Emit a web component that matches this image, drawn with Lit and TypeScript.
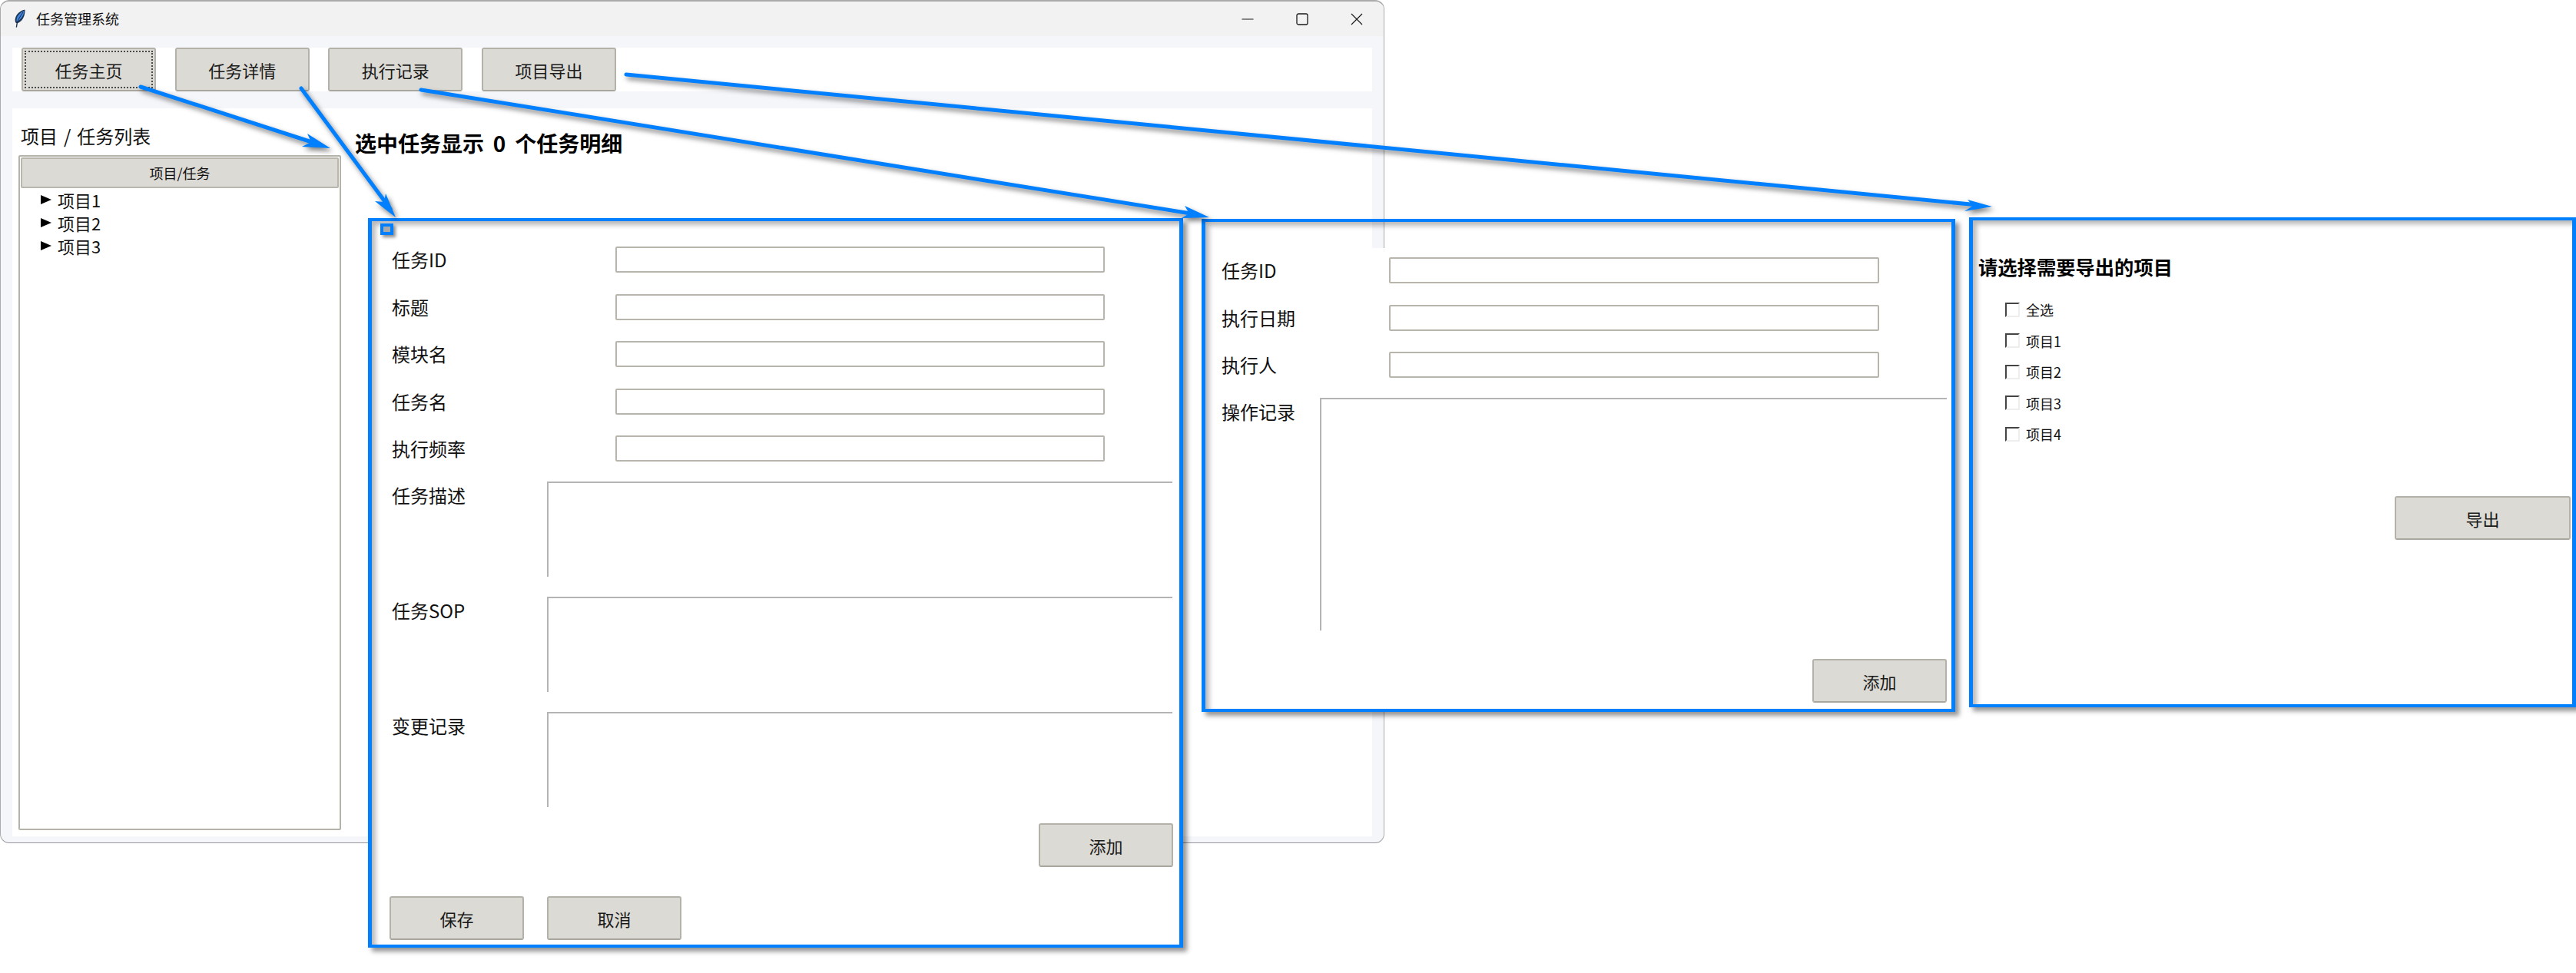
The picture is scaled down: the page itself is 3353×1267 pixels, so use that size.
import { LitElement, html, css, svg } from "lit";
import { customElement } from "lit/decorators.js";

const BLUE = "#0080ff";

const arrows = [
  { line: [183, 113, 412, 187], head: "430,193 400,174 405,185 393,191" },
  { line: [392, 115, 508, 272], head: "515,283 502,252 500,263 488,262" },
  { line: [548, 117, 1556, 279], head: "1574,283 1542,268 1548,278 1538,284" },
  { line: [815, 97, 2575, 267], head: "2593,269 2561,260 2568,268 2557,275" },
];

@customElement("app-root")
export class AppRoot extends LitElement {
  static styles = css`
    :host {
      display: block;
      position: relative;
      width: 3353px;
      height: 1267px;
      background: #fff;
      overflow: hidden;
      font-family: "Noto Sans CJK SC", "Noto Sans", sans-serif;
      color: #111;
    }
    * { box-sizing: border-box; }

    /* application window */
    .window {
      position: absolute;
      left: 0;
      top: 0;
      width: 1802px;
      height: 1098px;
      display: flex;
      flex-direction: column;
      background: #f5f6fa;
      border: 1px solid #ababab;
      border-top-width: 2px;
      border-bottom-color: #96969c;
      border-radius: 12px;
      overflow: hidden;
    }
    .sliver {
      position: absolute;
      left: -1px;
      top: 63px;
      width: 1px;
      height: 600px;
      background: #2f4059;
    }
    .titlebar {
      flex: none;
      height: 45px;
      background: #f2f2f2;
      display: flex;
      align-items: center;
      padding-left: 17px;
      font-size: 18px;
    }
    .titlebar .feather { margin-bottom: 2px; }
    .titlebar .name { margin-left: 14px; line-height: 45px; }
    .controls { margin-left: auto; display: flex; align-items: center; padding-right: 27px; gap: 55px; }
    .controls svg { display: block; width: 16px; height: 16px; }
    .client {
      flex: 1;
      min-height: 0;
      display: flex;
      flex-direction: column;
      gap: 22px;
      padding: 15px 15px 8px;
    }
    .toolbar {
      flex: none;
      height: 57px;
      background: #fff;
      display: flex;
      gap: 24.67px;
      padding-left: 12px;
    }
    .main {
      flex: 1;
      min-height: 0;
      background: #fff;
      display: flex;
    }
    .side {
      width: 428px;
      flex: none;
      padding: 18px 0 8px 8px;
      display: flex;
      flex-direction: column;
    }
    .side h2 {
      margin: 0 0 7px 3px;
      font-weight: 400;
      font-size: 24px;
      word-spacing: 2.5px;
      line-height: 36px;
      height: 36px;
    }
    .tree {
      flex: 1;
      border: 2px solid #b5b2a9;
      border-radius: 2px;
      padding: 1px;
      width: 420px;
    }
    .tree-head {
      height: 40px;
      background: #dcdad5;
      border: 2px solid #b9b6ae;
      border-radius: 2px;
      font-size: 18px;
      display: flex;
      align-items: center;
      justify-content: center;
    }
    .tree-row {
      height: 30px;
      display: flex;
      align-items: center;
      padding-left: 26px;
      font-size: 22px;
    }
    .tri {
      width: 0;
      height: 0;
      border-left: 14px solid #000;
      border-top: 6.5px solid transparent;
      border-bottom: 6.5px solid transparent;
      margin-right: 8px;
    }
    .detail-title {
      margin: 24px 0 0 18px;
      font-size: 28px;
      word-spacing: 5.5px;
      font-weight: 700;
      line-height: 42px;
      color: #000;
    }

    /* Tk-style controls */
    .btn {
      width: 175px;
      height: 57px;
      flex: none;
      padding: 0;
      font: inherit;
      font-size: 22px;
      color: #1a1a1a;
      background: #dcdad5;
      border: 2px solid #b4b1a9;
      border-bottom-color: #a9a69e;
      border-radius: 3px;
    }
    .btn.focus { outline: 2px dotted #4a4a4a; outline-offset: -6px; }
    .entry {
      display: block;
      height: 34px;
      padding: 0;
      border: 2px solid #b8b5ad;
      border-radius: 2px;
      background: #fff;
      outline: none;
    }
    .text {
      display: block;
      padding: 0;
      resize: none;
      background: #fff;
      outline: none;
      border: 0;
      border-top: 2px solid #b4b4b4;
      border-left: 2px solid #b4b4b4;
    }
    .label { font-size: 24px; line-height: 34px; color: #111; white-space: nowrap; }

    /* annotated snapshots on the canvas */
    .shot {
      position: absolute;
      border: 4px solid #0080ff;
      border-left-width: 5px;
      border-right-width: 5px;
      background: #fff;
      box-shadow: 5px 5px 6px rgba(0, 0, 0, 0.42), inset 5px 5px 6px rgba(0, 0, 0, 0.28);
      display: flex;
      flex-direction: column;
    }
    .shot1 { left: 479px; top: 284px; width: 1061px; height: 950px; padding: 33px 0 0 26px; }
    .shot2 {
      left: 1564px; top: 285px; width: 981px; height: 642px; padding: 46px 0 0 21px;
      background: linear-gradient(#fff, #fff) 0 34px no-repeat;
    }
    .shot3 { left: 2563px; top: 283px; width: 790px; height: 638px; padding: 42px 2px 0 7px; }
    .marker {
      position: absolute;
      left: 11px;
      top: 3px;
      width: 17px;
      height: 15px;
      background: #a9a9a9;
      border: 4px solid #0080ff;
      box-shadow: 3px 3px 4px rgba(0, 0, 0, 0.45);
    }
    .form { display: flex; flex-direction: column; gap: 27.5px; }
    .row { display: flex; height: 34px; align-items: center; }
    .textrow { display: flex; align-items: flex-start; }
    .s1 .lab-e { width: 291px; }
    .s1 .entry { width: 637px; }
    .s1 .lab-t { width: 202px; padding-top: 1px; }
    .s1 .text { width: 814px; height: 124px; }
    .s1 .texts { display: flex; flex-direction: column; gap: 26px; margin-top: 26px; }
    .s1 .add { align-self: flex-start; margin: 21px 0 0 842px; }
    .s1 .foot { display: flex; gap: 30px; margin: 38px 0 0 -3px; }
    .s2 .lab-e { width: 218px; }
    .s2 .entry { width: 638px; }
    .s2 .lab-t { width: 128px; padding-top: 1px; }
    .s2 .text { width: 816px; height: 303px; }
    .s2 .textrow { margin-top: 26px; }
    .s2 .add { margin: 37px 0 0 769px; }
    .s3 h3 {
      margin: 0;
      font-size: 25.3px;
      font-weight: 700;
      line-height: 36px;
      color: #000;
    }
    .checks { display: flex; flex-direction: column; gap: 14.5px; margin: 25px 0 0 35px; }
    .check { display: flex; align-items: center; height: 26px; font-size: 18px; }
    .box {
      width: 19px;
      height: 19px;
      margin-right: 8px;
      background: #fff;
      border: 2px solid #eee;
      border-top-color: #444;
      border-left-color: #444;
    }
    .s3 .export { align-self: flex-end; width: 229px; margin-top: 68px; }

    .arrows {
      position: absolute;
      left: 0;
      top: 0;
      width: 3353px;
      height: 1267px;
      pointer-events: none;
      filter: drop-shadow(3px 4px 3px rgba(0, 0, 0, 0.5));
    }
  `;

  private arrow(a: { line: number[]; head: string }) {
    const [x1, y1, x2, y2] = a.line;
    return svg`<line x1=${x1} y1=${y1} x2=${x2} y2=${y2} stroke=${BLUE} stroke-width="5" stroke-linecap="round"></line>
      <polygon points=${a.head} fill=${BLUE}></polygon>`;
  }

  private entryRow(label: string) {
    return html`<div class="row"><span class="label lab-e">${label}</span><input class="entry" type="text" /></div>`;
  }

  private textRow(label: string) {
    return html`<div class="textrow"><span class="label lab-t">${label}</span><textarea class="text"></textarea></div>`;
  }

  render() {
    return html`
      <div class="window">
        <span class="sliver"></span>
        <div class="titlebar">
          <svg class="feather" width="15" height="24" viewBox="0 0 15 24">
            <path d="M14.500 0.500C9 1.500 3.500 6 2 11.500c-.7 2.800-.4 4.800.6 6.200L3.500 18l-.8 5.500 1.300.3 1-5.800c4-1.200 7.500-5.500 8.800-10.500.6-2.500.9-5 .7-7.500z" fill="#1f3554"></path>
            <path d="M13.500 2C9.500 3.500 5.500 7 4 11.500c-.6 2-.6 3.500-.2 4.800 3.800-1.800 7-5 8.500-9 .7-1.800 1-3.500 1.200-5.300z" fill="#3f86e0"></path>
            <path d="M12 4C9 8 6.500 12 4 18" stroke="#15294a" stroke-width="1" fill="none"></path>
          </svg>
          <span class="name">任务管理系统</span>
          <div class="controls">
            <svg viewBox="0 0 16 16"><path d="M0.500 8H15.500" stroke="#1a1a1a" stroke-width="1"></path></svg>
            <svg viewBox="0 0 16 16"><rect x="1" y="1" width="14" height="14" rx="2" fill="none" stroke="#1a1a1a" stroke-width="1.300"></rect></svg>
            <svg viewBox="0 0 16 16"><path d="M1 1L15 15M15 1L1 15" stroke="#1a1a1a" stroke-width="1.200"></path></svg>
          </div>
        </div>
        <div class="client">
          <div class="toolbar">
            <button class="btn focus">任务主页</button>
            <button class="btn">任务详情</button>
            <button class="btn">执行记录</button>
            <button class="btn">项目导出</button>
          </div>
          <div class="main">
            <div class="side">
              <h2>项目 / 任务列表</h2>
              <div class="tree">
                <div class="tree-head">项目/任务</div>
                ${["项目1", "项目2", "项目3"].map(
                  (t) => html`<div class="tree-row"><span class="tri"></span>${t}</div>`
                )}
              </div>
            </div>
            <div class="detail-title">选中任务显示 0 个任务明细</div>
          </div>
        </div>
      </div>

      <section class="shot shot1 s1">
        <span class="marker"></span>
        <div class="form">
          ${["任务ID", "标题", "模块名", "任务名", "执行频率"].map((l) => this.entryRow(l))}
        </div>
        <div class="texts">
          ${["任务描述", "任务SOP", "变更记录"].map((l) => this.textRow(l))}
        </div>
        <button class="btn add">添加</button>
        <div class="foot">
          <button class="btn">保存</button>
          <button class="btn">取消</button>
        </div>
      </section>

      <section class="shot shot2 s2">
        <div class="form">
          ${["任务ID", "执行日期", "执行人"].map((l) => this.entryRow(l))}
        </div>
        ${this.textRow("操作记录")}
        <button class="btn add">添加</button>
      </section>

      <section class="shot shot3 s3">
        <h3>请选择需要导出的项目</h3>
        <div class="checks">
          ${["全选", "项目1", "项目2", "项目3", "项目4"].map(
            (l) => html`<div class="check"><span class="box"></span>${l}</div>`
          )}
        </div>
        <button class="btn export">导出</button>
      </section>

      <svg class="arrows" viewBox="0 0 3353 1267">${arrows.map((a) => this.arrow(a))}</svg>
    `;
  }
}
